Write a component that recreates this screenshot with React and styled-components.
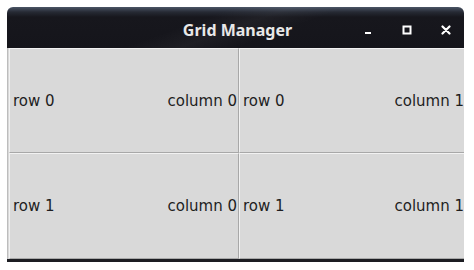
import React from "react";
import styled, { createGlobalStyle } from "styled-components";

const GlobalStyle = createGlobalStyle`
  html, body {
    margin: 0;
    padding: 0;
    background: #ffffff;
  }
`;

const cells = [
  { row: 0, column: 0 },
  { row: 0, column: 1 },
  { row: 1, column: 0 },
  { row: 1, column: 1 },
];

function App() {
  return (
    <>
      <GlobalStyle />
      <Page>
        <Window>
          <TitleBar>
            <Title>Grid Manager</Title>
            <Controls>
              <CtrlButton aria-label="minimize">
                <svg width="10" height="10" viewBox="0 0 10 10">
                  <rect x="2" y="7" width="6" height="2" fill="#fff" />
                </svg>
              </CtrlButton>
              <CtrlButton aria-label="maximize">
                <svg width="10" height="10" viewBox="0 0 10 10">
                  <rect x="1.5" y="1.5" width="7" height="7" fill="none" stroke="#fff" strokeWidth="2" />
                </svg>
              </CtrlButton>
              <CtrlButton aria-label="close">
                <svg width="10" height="10" viewBox="0 0 10 10">
                  <path d="M1.5 1.5 L8.5 8.5 M8.5 1.5 L1.5 8.5" stroke="#fff" strokeWidth="2.2" strokeLinecap="round" />
                </svg>
              </CtrlButton>
            </Controls>
          </TitleBar>
          <Grid>
            {cells.map((c) => (
              <Cell key={`${c.row}-${c.column}`}>
                <span>row {c.row}</span>
                <span>column {c.column}</span>
              </Cell>
            ))}
          </Grid>
        </Window>
      </Page>
    </>
  );
}

const Page = styled.div`
  width: 474px;
  height: 270px;
  padding: 7px 10px 0 7px;
  box-sizing: border-box;
`;

const Window = styled.div`
  width: 457px;
  display: flex;
  flex-direction: column;
  border-radius: 6px 6px 0 0;
  overflow: hidden;
  border-bottom: 3px solid #1c1d22;
`;

const TitleBar = styled.div`
  position: relative;
  height: 41px;
  display: flex;
  align-items: center;
  justify-content: center;
  background:
    linear-gradient(160deg, rgba(255, 255, 255, 0) 40%, rgba(255, 255, 255, 0.04) 50%, rgba(255, 255, 255, 0) 60%),
    linear-gradient(180deg, #4b5566 0px, #262a34 5px, #17171d 10px, #15151b 41px);
`;

const Title = styled.div`
  font-family: "Noto Sans", "DejaVu Sans", sans-serif;
  font-weight: 700;
  font-size: 16px;
  color: #e8e8e8;
  padding-top: 4px;
  padding-left: 4px;
`;

const Controls = styled.div`
  position: absolute;
  right: 8px;
  top: 13px;
  display: flex;
  gap: 19px;
`;

const CtrlButton = styled.div`
  width: 20px;
  height: 20px;
  display: flex;
  align-items: center;
  justify-content: center;
`;

const Grid = styled.div`
  display: grid;
  grid-template-columns: 230px 227px;
  grid-template-rows: 105px 106px;
  background: #d9d9d9;
  padding-left: 1px;
  border-left: 1px solid #bdbdbd;
`;

const Cell = styled.div`
  display: flex;
  align-items: center;
  justify-content: space-between;
  padding: 0 1px 0 3px;
  box-sizing: border-box;
  border: 1px solid #a8a8a8;
  border-top-color: #f2f2f2;
  border-left-color: #f2f2f2;
  background: #d9d9d9;
  font-family: "DejaVu Sans", sans-serif;
  font-size: 15px;
  color: #1e1e1e;
  white-space: nowrap;
`;

export default App;
